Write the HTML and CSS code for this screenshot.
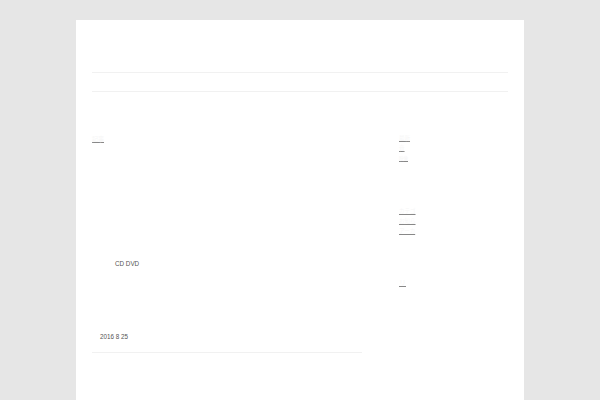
FILE: index.html
```html
<!DOCTYPE html>
<html lang="ja">
<head>
<meta charset="utf-8">
<title>ブログ</title>
<link rel="stylesheet" href="styles.css">
</head>
<body>
<div class="page">
  <header class="header"></header>
  <nav class="nav"></nav>
  <div class="content">
    <main class="main">
      <p class="line first"><a href="#" class="ghost wide">記事</a></p>
      <p class="line cd">CD DVD</p>
      <p class="line date">2016 8 25</p>
      <div class="rule"></div>
    </main>
    <aside class="side">
      <ul class="group g1">
        <li><a href="#" class="ghost">最新</a></li>
        <li><a href="#" class="ghost">音</a></li>
        <li><a href="#" class="ghost narrow">映像</a></li>
      </ul>
      <ul class="group g2">
        <li><a href="#" class="ghost">カテゴ</a></li>
        <li><a href="#" class="ghost">お知ら</a></li>
        <li><a href="#" class="ghost">アーカ</a></li>
      </ul>
      <ul class="group g3">
        <li><a href="#" class="ghost tiny">リ</a></li>
      </ul>
    </aside>
  </div>
</div>
</body>
</html>
```
FILE: styles.css
```css
html, body {
  margin: 0;
  padding: 0;
}
body {
  background: #e6e6e6;
  font-family: "Liberation Sans", "Noto Sans CJK JP", sans-serif;
  font-size: 6.3px;
  color: #555;
}
.page {
  width: 416px;
  margin: 20px auto 0;
  padding: 0 16px;
  background: #fff;
  min-height: 380px;
}
.header {
  height: 52px;
  border-bottom: 1px solid #f1f1f1;
}
.nav {
  height: 18px;
  border-bottom: 1px solid #f1f1f1;
}
.content {
  display: flex;
}
.main {
  width: 270px;
}
.side {
  margin-left: 37px;
  width: 109px;
}
.line {
  margin: 0;
  line-height: 10px;
}
.first { margin-top: 42px; }
.cd { margin-top: 115px; padding-left: 23px; }
.date { margin-top: 63px; padding-left: 8px; }
.rule {
  margin-top: 10px;
  border-top: 1px solid #f1f1f1;
}
.ghost {
  color: #f6f6f6;
  text-decoration: underline;
  text-decoration-color: #888;
  font-size: 5.5px;
}
.ghost.wide { font-size: 6px; }
.ghost.narrow { font-size: 4.5px; }
.ghost.tiny { font-size: 7px; }
.group {
  list-style: none;
  margin: 0;
  padding: 0;
  line-height: 10px;
}
.g1 { margin-top: 41px; }
.g2 { margin-top: 42px; }
.g3 { margin-top: 42px; }
```
